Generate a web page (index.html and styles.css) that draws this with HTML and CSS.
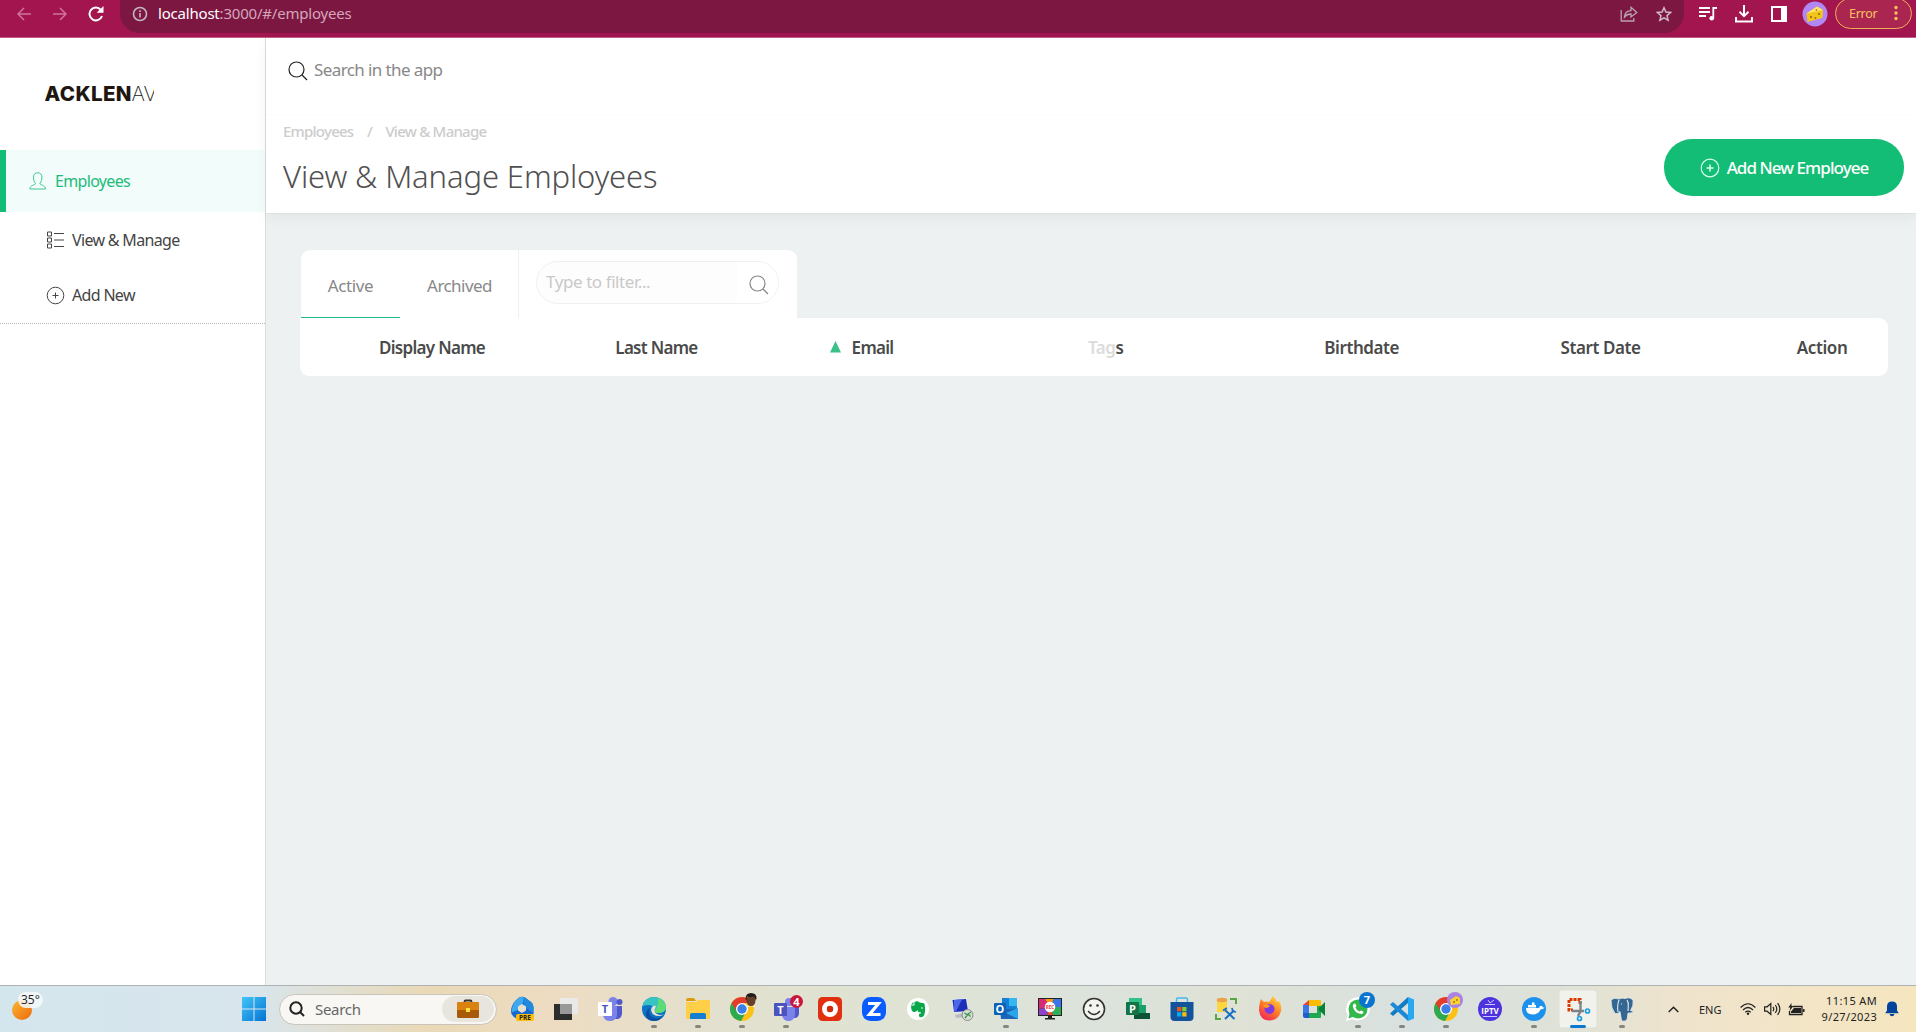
FILE: index.html
```html
<!DOCTYPE html>
<html lang="en">
<head>
<meta charset="utf-8">
<title>View &amp; Manage Employees</title>
<link rel="stylesheet" href="styles.css">
</head>
<body>
<header class="browser">
  <nav class="browser-nav">
    <svg width="14" height="14" viewBox="0 0 14 14" fill="none" stroke="#d0749a" stroke-width="1.5"><path d="M14 7H1M7 1L1 7l6 6"/></svg>
    <svg width="14" height="14" viewBox="0 0 14 14" fill="none" stroke="#d0749a" stroke-width="1.5"><path d="M0 7h13M7 1l6 6-6 6"/></svg>
    <svg class="reload" width="16" height="16" viewBox="0 0 16 16" fill="none" stroke="#fff" stroke-width="2"><path d="M14 10A6.4 6.4 0 1 1 12.8 3.8L14 5"/><path d="M15.500 0v6.800H8.700z" fill="#fff" stroke="none"/></svg>
  </nav>
  <div class="omnibox">
    <svg width="16" height="16" viewBox="0 0 16 16" fill="none" stroke="#c3b6c0" stroke-width="1.600"><circle cx="8" cy="8" r="6.500"/><path d="M8 7v4.500M8 4.200v1.700"/></svg>
    <span class="url"><b>localhost</b>:3000/#/employees</span>
    <svg width="18" height="16" viewBox="0 0 18 16" fill="none" stroke="#b9a3ae" stroke-width="1.300"><path d="M1.200 4v11h12.600v-3M4.500 11C4.800 7 7 4.800 11 4.700V1.300L16.800 6.500 11 11V8C8 8 6 9 4.500 11z"/></svg>
    <svg class="star" width="16" height="16" viewBox="0 0 16 16" fill="none" stroke="#cdbcc5" stroke-width="1.500"><path d="M8 1.800l1.900 4.300 4.700.4-3.600 3.100 1.100 4.600L8 11.800l-4.100 2.400L5 9.600 1.400 6.500l4.700-.4z"/></svg>
  </div>
  <div class="browser-tools">
    <svg width="18" height="16" viewBox="0 0 18 16" fill="none" stroke="#fff" stroke-width="1.800"><path d="M0 2h11M0 6h11M0 10h7M14.300 12.500V2H18"/><circle cx="12.700" cy="12.300" r="2.300" fill="#fff" stroke="none"/></svg>
    <svg width="18" height="18" viewBox="0 0 18 18" fill="none" stroke="#fff" stroke-width="2"><path d="M9 0v11M4.500 6.800L9 11.200l4.500-4.400M1 12v4.500h16V12"/></svg>
    <svg width="16" height="16" viewBox="0 0 16 16"><path d="M0 0h16v16H0zM2 2v12h8V2z" fill="#fff" fill-rule="evenodd"/></svg>
    <svg width="26" height="26" viewBox="0 0 26 26"><circle cx="13" cy="13" r="12.500" fill="#b087f5"/><path d="M4.500 12.500L15 5.500l6 3.500-.5 8-15 4z" fill="#f0c419"/><path d="M4.500 12.500L15 5.500l6 3.500z" fill="#ffe36b"/><circle cx="9" cy="16" r="1.100" fill="#8f6a10"/><circle cx="13.500" cy="17" r=".9" fill="#8f6a10"/><circle cx="17" cy="13" r="1" fill="#8f6a10"/><circle cx="14.500" cy="9" r=".9" fill="#b98d16"/></svg>
    <div class="error-chip"><span>Error</span><svg width="4" height="16" viewBox="0 0 4 16" fill="#fbc45e"><circle cx="2" cy="2.500" r="1.700"/><circle cx="2" cy="8" r="1.700"/><circle cx="2" cy="13.500" r="1.700"/></svg></div>
  </div>
</header>

<div class="app">
  <aside class="sidebar">
    <div class="logo"><svg class="logo-text" width="109" height="20" viewBox="0 0 109 20"><text x="-.5" y="17" class="logo-bold" textLength="87">ACKLEN</text><text x="86.500" y="17" class="logo-thin">AV</text></svg></div>
    <a class="nav-item active">
      <svg width="18" height="18" viewBox="0 0 18 18" fill="none" stroke="#3fc68d"><path d="M6.500 11.500C5 9.500 4.500 8 4.500 5.200 4.500 2.500 6.200.7 8.700.7s4.200 1.800 4.200 4.500c0 2.800-.6 4.300-2.100 6.300 0 1.500 5.700 1.600 5.700 5.500H.9c0-3.900 5.600-4 5.600-5.500z"/></svg>
      <span>Employees</span>
    </a>
    <a class="nav-item sub">
      <svg width="19" height="18" viewBox="0 0 19 18" fill="none" stroke="#444"><path d="M1.500 1h4v4h-4zM1.500 7h4v4h-4zM1.500 13h4v4h-4zM8 2.500h10M8 9h10M8 15.500h10"/></svg>
      <span>View &amp; Manage</span>
    </a>
    <a class="nav-item sub">
      <svg width="19" height="19" viewBox="0 0 19 19" fill="none" stroke="#444"><circle cx="9.500" cy="9.500" r="8.300"/><path d="M6.500 9.500h6M9.500 6.500v6"/></svg>
      <span>Add New</span>
    </a>
    <div class="divider"></div>
  </aside>
  <main class="main">
    <div class="page-head">
      <div class="app-search">
        <svg width="20" height="20" viewBox="0 0 20 20" fill="none" stroke="#222" stroke-width="1.200"><circle cx="8.500" cy="8.500" r="7.500"/><path d="M14 14l5 5"/></svg>
        <span>Search in the app</span>
      </div>
      <div class="head-row">
        <div class="headings">
          <div class="crumbs"><span>Employees</span><span class="slash">/</span><span>View &amp; Manage</span></div>
          <h1>View &amp; Manage Employees</h1>
        </div>
        <button class="add-btn">
          <svg width="20" height="20" viewBox="0 0 20 20" fill="none" stroke="#d9fff0" stroke-width="1.200"><circle cx="10" cy="10" r="8.800"/><path d="M6.500 10h7M10 6.500v7" stroke-width="1.500"/></svg>
          <span>Add New Employee</span>
        </button>
      </div>
    </div>
    <div class="content">
      <div class="toolbar">
        <div class="tab on"><span>Active</span></div>
        <div class="tab archived"><span>Archived</span></div>
        <div class="filter">
          <div class="filter-box">
            <span class="placeholder">Type to filter...</span>
            <span class="filter-btn"><svg width="20" height="20" viewBox="0 0 20 20" fill="none" stroke="#888" stroke-width="1.200"><circle cx="8.500" cy="8.500" r="7.500"/><path d="M14 14l5 5"/></svg></span>
          </div>
        </div>
      </div>
      <div class="table-head">
        <span>Display Name</span>
        <span>Last Name</span>
        <span class="sorted"><svg width="11" height="12" viewBox="0 0 11 12"><path d="M5.500 0L11 11.500H0z" fill="#3cc08a"/></svg><span>Email</span></span>
        <span class="loose"><em>Tag</em>s</span>
        <span class="loose">Birthdate</span>
        <span class="loose">Start Date</span>
        <span class="loose">Action</span>
      </div>
    </div>
  </main>
</div>

<footer class="taskbar">
  <div class="weather">
    <svg width="24" height="24" viewBox="0 0 24 24"><defs><linearGradient id="sun" x1="0" y1="0" x2="1" y2="1"><stop offset="0" stop-color="#f9b733"/><stop offset="1" stop-color="#ef6a0e"/></linearGradient></defs><circle cx="10" cy="13" r="10" fill="url(#sun)"/></svg>
    <span class="temp">35°</span>
  </div>
  <svg class="start" width="24" height="24" viewBox="0 0 24 24"><defs><linearGradient id="win" x1="0" y1="0" x2="1" y2="1" ><stop offset="0" stop-color="#43c5f8"/><stop offset="1" stop-color="#0473d2"/></linearGradient></defs><path d="M0 0h11.500v11.500H0zM12.500 0H24v11.500H12.500zM0 12.500h11.500V24H0zM12.500 12.500H24V24H12.500z" fill="url(#win)"/></svg>
  <div class="search-pill">
    <svg width="16" height="16" viewBox="0 0 16 16" fill="none" stroke="#222" stroke-width="2"><circle cx="7" cy="7" r="5.700"/><path d="M11 11l4 4"/></svg>
    <span>Search</span>
    <div class="case"><svg width="22" height="20" viewBox="0 0 22 20"><path d="M7.500 4V2.500q0-1 1-1h5q1 0 1 1V4" fill="none" stroke="#3a332b" stroke-width="1.800"/><rect y="3" width="22" height="16" rx="1.500" fill="#a85a08"/><path d="M0 4.500Q0 3 1.500 3h19Q22 3 22 4.500V11H0z" fill="#d98210"/><rect x="9" y="9" width="4" height="4" fill="#ffdf3d"/></svg></div>
  </div>
  <div class="apps">
    <svg viewBox="0 0 44 46"><path d="M19 11.500q3-1.500 6 0l6 4.500q2.500 2 2.500 5v6q0 3-3 4l-6 3.500q-3 1-6-.5-7.500-4-7.500-8.500 0-8 8-14z" fill="#1769d1"/><path d="M19 11.500q3-1.500 5 0-1 8-5 12l-7.500 3q0-9 7.500-15z" fill="#3fa9ee"/><path d="M25 11.500l6 4.500q2.500 2 2.500 5v6l-9-6q-1-5-1.500-10z" fill="#2389dd"/><path d="M22 18l4 2.500v4L22 27l-4-2.500v-4z" fill="#e8e0cf"/><rect x="16" y="28" width="18" height="7" rx="2" fill="#fcbf0b"/><text x="25" y="34" class="tiny dark">PRE</text></svg>
    <svg viewBox="0 0 44 46"><path d="M10 18h18v16H10z" fill="#2d2d2d"/><path d="M16 12h18v16H16z" fill="#e9ebec" opacity=".9"/><path d="M16 18h12v10H16z" fill="#999"/></svg>
    <svg viewBox="0 0 44 46"><circle cx="25" cy="15.500" r="4.500" fill="#7b83eb"/><circle cx="31.500" cy="16" r="3" fill="#5059c9"/><path d="M27 20h7v8q-1 5-4 5h-3z" fill="#5059c9"/><path d="M15 20h14v9q-1 6-7 6t-7-6z" fill="#7b83eb"/><rect x="10" y="16" width="14" height="14" rx="1" fill="#fff"/><text x="17" y="27" class="let violet">T</text></svg>
    <svg viewBox="0 0 44 46"><circle cx="22" cy="23" r="12" fill="#0b74c4"/><path d="M10.500 20Q13 11 22 11q12 1 12 11-1 5-8 5-4 0-3-4-3-6-12.500-3z" fill="#39c4c3"/><path d="M26 12q8 3 8 10-1 5-8 5-3 0-3-2 4-5 3-13z" fill="#5edc74"/><path d="M18 22q-3 8 5 10 5 1 9-3-4 6-10 6-9-1-8-8 1-4 4-5z" fill="#0c4fa0"/><path d="M24 20q-4-1-5 4 1 6 8 6 3 0 6-2-4 2-8 0-4-2-1-8z" fill="#e6e1cf"/><rect class="run" x="19" y="39" width="6" height="3" rx="1.500"/></svg>
    <svg viewBox="0 0 44 46"><path d="M10 14q0-2 2-2h6l2 3h-10z" fill="#dd9c10"/><path d="M10 16h10l2-2h12v19H10z" fill="#ffcf48"/><path d="M14 33v-4q0-2 2-2h12q2 0 2 2v4z" fill="#157ed0"/><rect class="run" x="19" y="39" width="6" height="3" rx="1.500"/></svg>
    <svg viewBox="0 0 44 46"><use href="#chrome"/><ellipse cx="31" cy="14.500" rx="4.500" ry="5.500" fill="#66402a"/><path d="M25.500 13q0-6 5.500-6 6 0 5.500 6l-1 1q-.5-3-2-3.500-4 1-6.500 0l-.5 4z" fill="#221d1b"/><path d="M27 19.500l4 1.500 4-1.500V21h-8z" fill="#eee"/><rect class="run" x="19" y="39" width="6" height="3" rx="1.500"/></svg>
    <svg viewBox="0 0 44 46"><circle cx="25" cy="16" r="4" fill="#7b83eb"/><path d="M29 21h6v7q-1 4-4 4h-3z" fill="#5059c9"/><path d="M18 21h13v8q-1 6-6.500 6T18 29z" fill="#7b83eb"/><rect x="10" y="17" width="13" height="13" rx="1" fill="#4b53bc"/><text x="16.500" y="27.500" class="let">T</text><circle cx="32.500" cy="15.500" r="6.500" fill="#c8163c"/><text x="32.500" y="19.500" class="let">4</text><rect class="run" x="19" y="39" width="6" height="3" rx="1.500"/></svg>
    <svg viewBox="0 0 44 46"><rect x="10" y="11" width="24" height="24" rx="4.500" fill="#e1300f"/><circle cx="22" cy="23" r="5.500" fill="none" stroke="#fff" stroke-width="5"/><circle cx="22" cy="23" r="3.200" fill="#d12a0c"/></svg>
    <svg viewBox="0 0 44 46"><rect x="10" y="11" width="24" height="24" rx="8.500" fill="#0b5cff"/><path d="M16 17.500h10.500L17.500 28.500h11" fill="none" stroke="#fff" stroke-width="3.200"/></svg>
    <svg viewBox="0 0 44 46"><circle cx="22" cy="23" r="11" fill="#fff"/><path d="M15 19.500h3.500V16q3-1.500 5 .5 4 0 5 1.500 1.500 7-.5 11.500-1.500 2.500-4.500 1.500-1.500-2 0-3.500h1.500v-1q-3.500 0-3.500-2.500-1 2.500-4 2-2.500-1-2.500-6.500z" fill="#0ba84a"/><path d="M15 18.500h2.500V16z" fill="#0ba84a"/><circle cx="26" cy="22" r=".8" fill="#fff"/></svg>
    <svg viewBox="0 0 44 46"><path d="M11 13l16-1 2 14-16 1z" fill="#e3e6ec"/><path d="M12.500 14l13.500-1 2 12-14 1z" fill="#1b2fb8"/><path d="M14 14l8-.6-6 12h-2z" fill="#4967e8"/><path d="M15 29l9-2 2 4-10 1z" fill="#b9bcc2"/><circle cx="27.500" cy="29" r="5.500" fill="#d8dad5" stroke="#8c8f8c"/><path d="M24.500 27l3 2-2.500 3M31 26l-3 2 2.500 2.500" fill="none" stroke="#3b9a44" stroke-width="1.300"/></svg>
    <svg viewBox="0 0 44 46"><path d="M18 12h15v21H18z" fill="#1380d6"/><path d="M25 12h8v8h-8z" fill="#35b8f1"/><path d="M16 23l18 0v10H17z" fill="#1b66b8"/><path d="M34 22v11L22 27z" fill="#2aa4ea"/><rect x="10" y="17" width="12" height="12" rx="1" fill="#0a62b8"/><text x="16" y="27" class="let">O</text><rect class="run" x="19" y="39" width="6" height="3" rx="1.500"/></svg>
    <svg viewBox="0 0 44 46"><rect x="10" y="12" width="24" height="18" fill="#222"/><path d="M11 13h6l5 8-11 2z" fill="#d62976"/><path d="M17 13h9l-4 8z" fill="#f59a1b"/><path d="M26 13h7v8H22z" fill="#3a76e8"/><path d="M22 21h11v8h-8z" fill="#2fae57"/><path d="M11 23l11-2-3 8h-8z" fill="#8d43c8"/><path d="M19 29l3-8 3 8z" fill="#e8502f"/><circle cx="22" cy="21" r="5.300" fill="#fff"/><text x="22" y="22.800" class="rec">REC</text><path d="M20 30h4v2h3v1.500H17V32h3z" fill="#222"/></svg>
    <svg viewBox="0 0 44 46"><circle cx="22" cy="23" r="10.500" fill="#f4f4ee" stroke="#333" stroke-width="1.600"/><path d="M16 25q6 7 12 0" fill="none" stroke="#333" stroke-width="1.300"/><circle cx="18.500" cy="19.500" r="1.300" fill="#333"/><circle cx="25.500" cy="19.500" r="1.300" fill="#333"/></svg>
    <svg viewBox="0 0 44 46"><path d="M13 12h13v10H13z" fill="#2fc28a"/><path d="M20 19h10v8H20z" fill="#1c9e6a"/><path d="M18 27h16v6H18z" fill="#0d5437"/><rect x="10" y="16" width="13" height="13" rx="1" fill="#127445"/><text x="16.500" y="26.500" class="let">P</text></svg>
    <svg viewBox="0 0 44 46"><path d="M16.500 17v-3.500q0-1.500 1.500-1.500h8q1.500 0 1.500 1.500V17" fill="none" stroke="#3fb9f3" stroke-width="1.500"/><path d="M10.500 16h23v15q0 4-4 4h-15q-4 0-4-4z" fill="#12539c"/><path d="M17 21h4.300v4.300H17z" fill="#f1511b"/><path d="M22.200 21h4.300v4.300h-4.300z" fill="#80cc28"/><path d="M17 26.200h4.300v4.300H17z" fill="#00adef"/><path d="M22.200 26.200h4.300v4.300h-4.300z" fill="#fbbc09"/></svg>
    <svg viewBox="0 0 44 46"><path d="M13 14h10v12H13z" fill="#fbd63c"/><ellipse cx="18" cy="14" rx="5.300" ry="2.200" fill="#eca14c"/><path d="M26 13h6v5M12 28v5h5" fill="none" stroke="#5ba644" stroke-width="2"/><path d="M21 24l9.500 9M30 24.500L21 33" stroke="#1670c5" stroke-width="2"/><path d="M19 24.500l4-2.500M28 22l.8 3.200 3.200.8" fill="none" stroke="#1670c5" stroke-width="1.800"/></svg>
    <svg viewBox="0 0 44 46"><defs><linearGradient id="fox" x1=".8" y1="0" x2=".2" y2="1"><stop offset="0" stop-color="#ffdc3f"/><stop offset=".5" stop-color="#ff7a26"/><stop offset="1" stop-color="#f0235c"/></linearGradient></defs><path d="M12 16l1-3 3 3q3-1 5 0 3-4 4-6 3 3 4 6l2-1q3 5 2 10-2 9-11 9.500-10 0-11-10 0-5 1-8.500z" fill="url(#fox)"/><circle cx="21.500" cy="23" r="5" fill="#7a3ce0"/><path d="M15 19q5-2 7 1l-3 2q-3 0-4-3z" fill="#ff9a22"/></svg>
    <svg viewBox="0 0 44 46"><path d="M11 19l6-5v5z" fill="#ea4335"/><path d="M17 14h11q1 0 1 1v5H17z" fill="#fbbc04"/><path d="M11 19h6v8h-6z" fill="#3b78e7"/><path d="M11 27h6v5h-4q-2 0-2-2z" fill="#1f5cd0"/><path d="M17 27h12v4q0 1-1 1H17z" fill="#20a84e"/><path d="M25 20h4v8h-4z" fill="#20a84e"/><path d="M26 23l7-7v14z" fill="#0b8038"/></svg>
    <svg viewBox="0 0 44 46"><path d="M10 35l1.700-6q-2-3-1.700-6 1-11 12-12 11 1 12 12-1 10-12 11.500-3 0-6-1.300z" fill="#fff"/><circle cx="22" cy="23" r="9.500" fill="#35b84b"/><path d="M12.500 32.500l1.300-6 4 4z" fill="#35b84b"/><path d="M17.500 18q1.500-1 2 0l1 2-1 1.500q1 3 4 4l1.500-1 2.300 1q.5 2-2 2.500-7-.5-8.600-8z" fill="#fff"/><circle cx="31" cy="14" r="8" fill="#0a75cf"/><text x="31" y="18" class="let">7</text><rect class="run" x="19" y="39" width="6" height="3" rx="1.500"/></svg>
    <svg viewBox="0 0 44 46"><path d="M28 11l6 2.500v19L28 35z" fill="#2aa9f3"/><path d="M28 17L13 30l-3-2.500L28 11z" fill="#0f7cc4"/><path d="M28 29L13 16l-3 2.500L28 35z" fill="#1a8ad6"/><rect class="run" x="19" y="39" width="6" height="3" rx="1.500"/></svg>
    <svg viewBox="0 0 44 46"><g id="chrome"><circle cx="22" cy="23" r="12" fill="#fbc116"/><path d="M22 23L11.600 17A12 12 0 0 0 21 35z" fill="#2da94f"/><path d="M11.600 17l5.200 9 4.200 9 5-9z" fill="#2da94f"/><path d="M22 17h10.400A12 12 0 0 0 11.600 17l5 8z" fill="#e33b2e"/><circle cx="22" cy="23" r="6" fill="#fff"/><circle cx="22" cy="23" r="4.700" fill="#3a7ee8"/></g><circle cx="31" cy="14" r="8" fill="#ab82e4"/><path d="M26 14l6-4 4 2v6l-9 1z" fill="#fbd32f"/><circle cx="30" cy="16" r=".9" fill="#96700e"/><circle cx="33" cy="14" r=".9" fill="#96700e"/><rect class="run" x="19" y="39" width="6" height="3" rx="1.500"/></svg>
    <svg viewBox="0 0 44 46"><circle cx="22" cy="23" r="12" fill="#4c33dd"/><path d="M17 18.500h10M20 14l2 3 4-3M15 30.500h14" stroke="#cfc8ff" stroke-width="1" fill="none"/><text x="22" y="28" class="iptv">IPTV</text></svg>
    <svg viewBox="0 0 44 46"><circle cx="22" cy="23" r="12" fill="#1d91ec"/><path d="M14 22h13q1-3 3-2l1 1.500h1.500q-1 2-4 2-2 5-8 5-6.500 0-6.500-6.500z" fill="#fff"/><path d="M16 19h8v2.500h-8zM20 16.500h2.500V19H20z" fill="#fff"/><rect class="run" x="19" y="39" width="6" height="3" rx="1.500"/></svg>
    <svg viewBox="0 0 44 46"><rect x="3" y="4" width="38" height="38" rx="3" fill="#f2f2ed" stroke="#dedfd8"/><path d="M24 18v-4.500H13V24h4" fill="none" stroke="#d83b01" stroke-width="3" stroke-dasharray="3 1"/><path d="M24.500 15v10q0 1.500-1.500 3l-1 2M16 25h12" fill="none" stroke="#7c8287" stroke-width="2.300"/><circle cx="31.500" cy="25" r="2" fill="none" stroke="#1f9fe0" stroke-width="1.700"/><circle cx="23.500" cy="32.500" r="2" fill="none" stroke="#1f9fe0" stroke-width="1.700"/><rect x="14" y="39" width="16" height="3" rx="1.500" fill="#0b78d0"/></svg>
    <svg viewBox="0 0 44 46"><path d="M11 14q3-3 8-1 3-1.500 6-.5 6-2 8 2 1 5-2.500 10l3 .5q-2 3-5.500 2-.5 6-1.500 7.500-3 1.500-5 0l-1.500-9q-2 3-5 2-4-5-4-13.500z" fill="#336791" stroke="#e9eff2" stroke-width=".8"/><path d="M19 14q-2 5-1 12M27 14q2 3 1 11M21 18h1M28 17h1" fill="none" stroke="#e9eff2" stroke-width="1.100"/><rect class="run" x="19" y="39" width="6" height="3" rx="1.500"/></svg>
  </div>
  <div class="tray">
    <svg width="11" height="7" viewBox="0 0 11 7" fill="none" stroke="#222" stroke-width="1.500"><path d="M.7 6l4.800-4.700L10.300 6"/></svg>
    <span class="lang">ENG</span>
    <svg width="16" height="12" viewBox="0 0 16 12" fill="none" stroke="#222" stroke-width="1.200"><path d="M.6 4.500q7.400-7.500 14.800 0M3 7q5-5 10 0M5.300 9.300q2.700-2.500 5.400 0"/><circle cx="8" cy="10.800" r="1.200" fill="#222" stroke="none"/></svg>
    <svg width="17" height="14" viewBox="0 0 17 14" fill="none" stroke="#222" stroke-width="1.200"><path d="M.6 4.800h2.500L6.800 1.500v11L3.100 9.200H.6zM9 4.800q1.500 2.200 0 4.400M11.300 3q3 4 0 8M13.600 1.200q4.500 5.800 0 11.600"/></svg>
    <svg class="battery" width="17" height="13" viewBox="0 0 17 13"><path d="M5 3.500h9v8H1.500V8" fill="none" stroke="#222" stroke-width="1.300"/><path d="M6 5h7v5H3V8.500zM14.800 6h1.700v3h-1.700zM3.500 0L.3 4.500h2L1.500 8 5.500 3h-2z" fill="#222"/></svg>
    <div class="clock"><span>11:15 AM</span><span>9/27/2023</span></div>
    <svg width="14" height="16" viewBox="0 0 14 16"><path d="M7 .5q5 0 5 5v4l1.800 2.700H.2L2 9.500v-4q0-5 5-5zM4.500 13h5Q9 15.200 7 15.200T4.500 13z" fill="#04439c"/></svg>
  </div>
</footer>
</body>
</html>
```
FILE: styles.css
```css
* { box-sizing: border-box; }
body {
  margin: 0;
  width: 1916px;
  height: 1032px;
  overflow: hidden;
  display: flex;
  flex-direction: column;
  font-family: "Noto Sans", "Open Sans", sans-serif;
  color: #444;
  background: #fff;
}
svg { display: block; flex: none; }
span, h1, b { white-space: nowrap; }

/* Browser toolbar */
.browser {
  height: 38px;
  flex: none;
  display: flex;
  background: #a2154f;
  border-bottom: 1px solid #c25c86;
}
.browser-nav { width: 120px; height: 28px; padding-left: 17px; display: flex; align-items: center; gap: 22px; }
.reload { margin-left: -1px; }
.omnibox {
  width: 1564px;
  height: 33px;
  padding: 0 12px 5px;
  display: flex;
  align-items: center;
  background: #7c1742;
  border-radius: 0 0 20px 20px;
}
.url { margin: -2px auto 0 10px; font-size: 15px; letter-spacing: -.2px; color: #d4a6bb; }
.url b { font-weight: 400; color: #fff; }
.star { margin-left: 18px; }
.browser-tools { height: 28px; padding-left: 15px; display: flex; align-items: center; gap: 18px; }
.browser-tools > svg:nth-child(4) { margin-left: -3px; }
.error-chip {
  width: 77px;
  height: 31px;
  margin: -1px 0 0 -11px;
  padding: 0 0 1px 13px;
  display: flex;
  align-items: center;
  gap: 17px;
  font-size: 12.500px;
  letter-spacing: -.3px;
  color: #fbc45e;
  background: #aa2550;
  border: 1px solid #f3ae58;
  border-radius: 16px;
}

/* App shell */
.app { flex: 1; display: flex; min-height: 0; }
.sidebar { width: 266px; flex: none; border-right: 1px solid #d9dcdd; }
.logo { height: 112px; padding: 46px 0 0 45px; }
.logo-text { overflow: hidden; }
.logo-bold, .logo-thin { font: 800 20.500px Inter, sans-serif; fill: #20160f; }
.logo-thin { font-weight: 200; }
.nav-item { display: flex; align-items: center; font-size: 16px; letter-spacing: -.67px; }
.nav-item.active { height: 62px; padding-left: 23px; gap: 8px; color: #21bb78; background: #f2fcfb; border-left: 6px solid #14bd75; }
.nav-item.sub { height: 55px; padding-left: 46px; gap: 7px; }
.nav-item.active + .sub { height: 56px; }
.nav-item.sub span { margin-top: -1px; }
.divider { border-bottom: 1px dotted #b9b9b9; }

.main { flex: 1; min-width: 0; background: #edf1f2; }
.page-head { position: relative; height: 176px; background: #fff; border-bottom: 1px solid #dfe2e3; box-shadow: 0 4px 14px rgba(0, 0, 0, .05); }
.app-search { height: 77px; padding: 0 0 11px 22px; display: flex; align-items: center; gap: 6px; font-size: 17px; letter-spacing: -.6px; color: #888; border-bottom: 1px solid #fcfcfc; }
.app-search span { margin-top: -2px; }
.head-row { height: 97px; padding: 0 12px 0 17px; display: flex; justify-content: space-between; align-items: flex-start; }
.headings { padding-top: 5px; }
.crumbs { display: flex; gap: 13.500px; font-size: 15px; line-height: 22px; letter-spacing: -.76px; color: #ccc; font-weight: 500; }
h1 { margin: 12px 0 0; font-size: 31px; line-height: 44px; font-weight: 300; letter-spacing: -.11px; color: #505050; }
.add-btn {
  width: 240px;
  height: 57px;
  margin-top: 24px;
  padding: 0;
  display: flex;
  align-items: center;
  justify-content: center;
  gap: 7px;
  font: 500 17px "Noto Sans", sans-serif;
  letter-spacing: -.93px;
  color: #fff;
  background: #14bd75;
  border: 0;
  border-radius: 28px;
}

.content { padding: 36px 28px 0 34px; }
.toolbar { width: 496px; height: 68px; margin-left: 1px; display: flex; background: #fff; border-radius: 9px 9px 0 0; }
.tab { width: 99px; height: 68px; padding-top: 3px; display: flex; align-items: center; justify-content: center; font-size: 17px; letter-spacing: -.35px; color: #888; }
.archived { width: 118px; padding-left: 1px; letter-spacing: -.55px; }
.tab.on { border-bottom: 1px solid #20b887; }
.filter { flex: 1; padding: 11px 18px 0 17px; border-left: 1px solid #eef0f0; }
.filter-box { height: 43px; display: flex; align-items: center; padding-left: 9px; border: 1px solid #f0f0f0; border-radius: 22px; background: #fdfdfd; font-size: 17px; letter-spacing: -.42px; color: #c9c9c9; }
.placeholder { margin-top: -2px; }
.filter-btn { margin-left: auto; width: 41px; height: 41px; padding: 13px 0 0 12px; background: #fff; border-radius: 0 22px 22px 0; }
.table-head {
  height: 58px;
  padding-left: 79px;
  display: grid;
  grid-template-columns: repeat(6, 236.300px) 1fr;
  align-items: center;
  font-size: 17px;
  font-weight: 600;
  letter-spacing: -.7px;
  color: #4a4a4a;
  background: #fff;
  border-radius: 0 9px 9px 9px;
}
.table-head em { font-style: normal; color: #dcdcdc; }
.loose { letter-spacing: -.4px; }
.sorted { display: flex; align-items: center; gap: 11px; margin-left: -22px; }

/* Taskbar */
.taskbar {
  height: 47px;
  flex: none;
  display: flex;
  align-items: center;
  border-top: 1px solid #aeb2b3;
  background: linear-gradient(90deg, #d4e6ed 0, #d8e5ed 250px, #ead9b6 430px, #eddcc2 560px, #e3e0ce 700px, #dfe3d3 880px, #dce3dc 1100px, #dfe2d5 1240px, #d8e1e0 1420px, #dfe2d6 1570px, #efe3cd 1680px, #f5e6bf 1916px);
}
.weather { width: 242px; padding-left: 12px; position: relative; }
.temp { position: absolute; left: 18px; top: -5px; padding: 0 3px; height: 16px; font: 12px/16px "Open Sans", sans-serif; color: #222; background: rgba(245, 248, 250, .88); border-radius: 8px; }
.start { margin: 0 13px 0 0; }
.search-pill { width: 218px; height: 31px; padding: 0 2px 0 9px; display: flex; align-items: center; gap: 10px; font-size: 15px; letter-spacing: -.3px; color: #666; background: #f8f7f3; border: 1px solid #c9c5bb; border-radius: 16px; }
.case { width: 52px; height: 26px; margin-left: auto; display: grid; place-items: center; background: #e8e5df; border-radius: 13px; }
.apps { display: grid; grid-template-columns: repeat(26, 44px); margin-left: 3px; }
.apps svg { width: 44px; height: 46px; }
.run { fill: #85867f; }
.let, .tiny, .rec, .iptv { font: bold 11px "Open Sans", sans-serif; text-anchor: middle; fill: #fff; }
.tiny { font-size: 6.500px; }
.iptv { font-size: 8px; }
.rec { font-size: 4.500px; fill: #e33; }
.dark { fill: #222; }
.violet { fill: #4b53bc; }
.tray { display: flex; align-items: center; margin-left: 24px; color: #222; font-size: 11px; }
.lang { margin: 0 19px 0 20px; }
.tray svg + svg { margin-left: 8px; }
.tray .battery { margin-left: 7px; }
.clock { display: flex; flex-direction: column; align-items: flex-end; margin: 0 8px 0 16px; line-height: 16px; letter-spacing: .38px; }
```
